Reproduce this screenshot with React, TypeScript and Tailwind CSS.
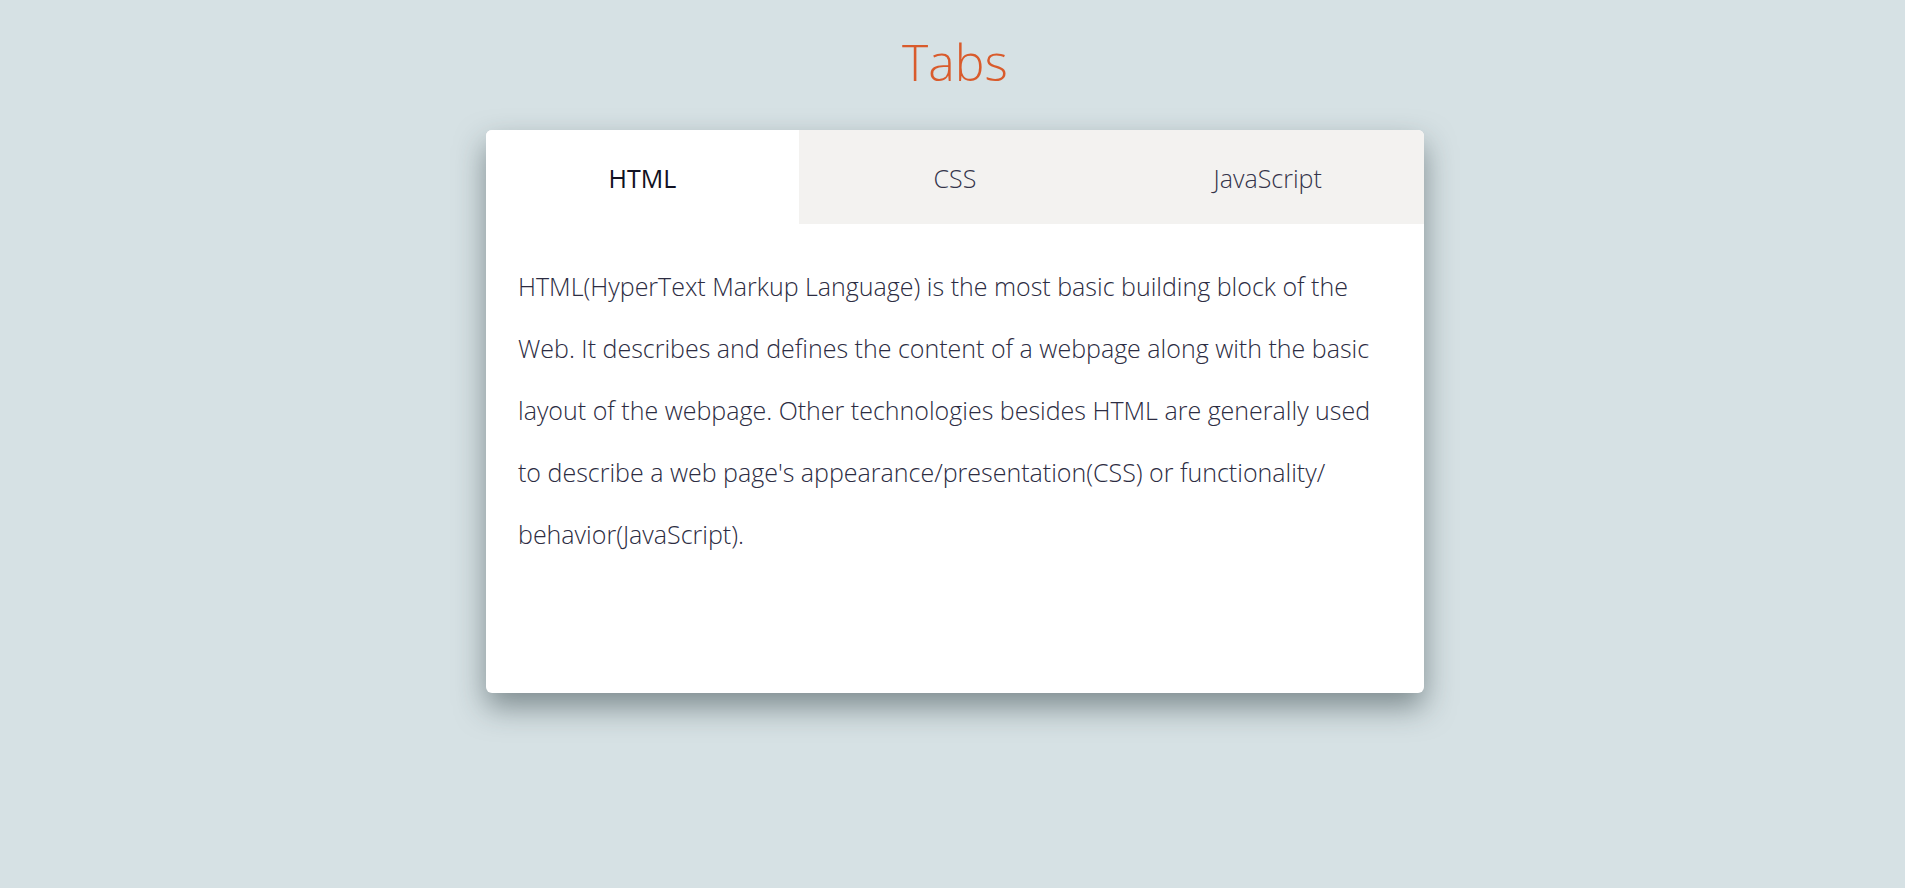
import { useState } from "react";

const tabs = [
  {
    id: "html",
    label: "HTML",
    body: "HTML(HyperText Markup Language) is the most basic building block of the Web. It describes and defines the content of a webpage along with the basic layout of the webpage. Other technologies besides HTML are generally used to describe a web page's appearance/presentation(CSS) or functionality/ behavior(JavaScript).",
  },
  {
    id: "css",
    label: "CSS",
    body: "Cascading Style Sheets (CSS) is a stylesheet language used to describe the presentation of a document written in HTML or XML. CSS describes how elements should be rendered on screen, on paper, in speech, or on other media.",
  },
  {
    id: "js",
    label: "JavaScript",
    body: "JavaScript (JS) is a lightweight, interpreted, or just-in-time compiled programming language with first-class functions. It is best known as the scripting language for Web pages.",
  },
];

export default function App() {
  const [active, setActive] = useState("html");
  const current = tabs.find((t) => t.id === active)!;

  return (
    <div
      className="min-h-screen w-full bg-[#d6e1e4] flex flex-col items-center pl-[5px]"
      style={{ fontFamily: '"Open Sans", sans-serif' }}
    >
      <h1 className="pt-[28px] mb-[34px] text-[50px] font-light text-[#d95b2c] leading-[normal]">
        Tabs
      </h1>

      {/* Card */}
      <div className="w-[938px] h-[563px] bg-white rounded-md overflow-hidden shadow-[0_14px_30px_rgba(40,55,60,0.5)] flex flex-col">
        <div className="flex h-[94px] bg-[#f3f2f0]">
          {tabs.map((tab) => (
            <button
              key={tab.id}
              onClick={() => setActive(tab.id)}
              className={
                tab.id === active
                  ? "flex-1 flex items-center justify-center pt-[3px] bg-white text-[25px] font-normal text-[#111122]"
                  : "flex-1 flex items-center justify-center pt-[3px] text-[25px] font-light text-[#34344a]"
              }
            >
              {tab.label}
            </button>
          ))}
        </div>

        <div className="px-8 pt-[31px]">
          <p className="text-[25px] font-light leading-[62px] text-[#2c2c42]">
            {current.body}
          </p>
        </div>
      </div>
    </div>
  );
}
